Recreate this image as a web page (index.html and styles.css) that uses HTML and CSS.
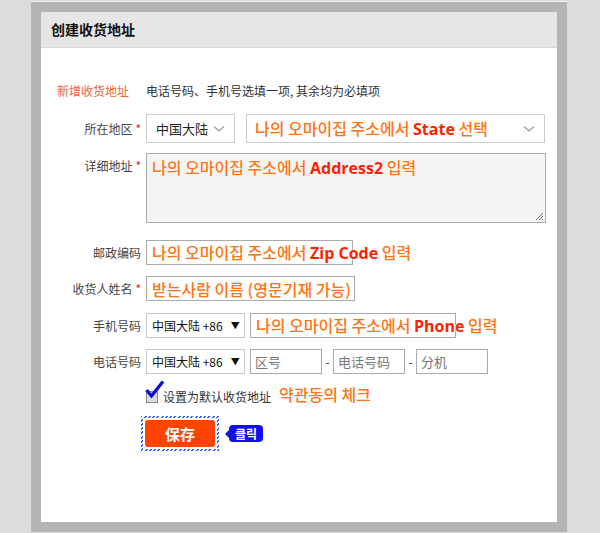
FILE: index.html
```html
<!DOCTYPE html>
<html lang="zh-CN">
<head>
<meta charset="utf-8">
<title>创建收货地址</title>
<link rel="stylesheet" href="styles.css">
</head>
<body>
<div class="frame">
  <div class="dialog">
    <div class="hd">创建收货地址</div>
    <div class="form">
      <div class="notice">
        <span class="new">新增收货地址</span>
        <span class="tip">电话号码、手机号选填一项, 其余均为必填项</span>
      </div>

      <div class="row r-region">
        <label class="lbl">所在地区<i>*</i></label>
        <div class="sel sel-country"><span>中国大陆</span>
          <svg class="chev" width="12" height="8" viewBox="0 0 12 8"><path d="M1 1.5 L6 6 L11 1.5" fill="none" stroke="#999" stroke-width="1.2"/></svg>
        </div>
        <div class="sel sel-state"><span class="ann">나의 오마이집 주소에서 <b>State</b> 선택</span>
          <svg class="chev" width="12" height="8" viewBox="0 0 12 8"><path d="M1 1.5 L6 6 L11 1.5" fill="none" stroke="#999" stroke-width="1.2"/></svg>
        </div>
      </div>

      <div class="row r-addr">
        <label class="lbl top">详细地址<i>*</i></label>
        <div class="area"><span class="ann">나의 오마이집 주소에서 <b>Address2</b> 입력</span>
          <svg class="grip" width="9" height="9" viewBox="0 0 9 9"><path d="M8 1 L1 8 M8 4 L4 8 M8 7 L7 8" stroke="#777" stroke-width="1"/></svg>
        </div>
      </div>

      <div class="row r-zip">
        <label class="lbl">邮政编码</label>
        <div class="inp w-zip"><span class="ann">나의 오마이집 주소에서 <b>Zip Code</b> 입력</span></div>
      </div>

      <div class="row r-name">
        <label class="lbl">收货人姓名<i>*</i></label>
        <div class="inp w-name"><span class="ann">받는사람 이름 (영문기재 가능)</span></div>
      </div>

      <div class="row r-mobile">
        <label class="lbl">手机号码</label>
        <div class="sel sel-code">中国大陆 +86<span class="tri">▼</span></div>
        <div class="inp w-mobile"><span class="ann">나의 오마이집 주소에서 <b>Phone</b> 입력</span></div>
      </div>

      <div class="row r-phone">
        <label class="lbl">电话号码</label>
        <div class="sel sel-code">中国大陆 +86<span class="tri">▼</span></div>
        <div class="inp small ph">区号</div>
        <span class="dash">-</span>
        <div class="inp small ph">电话号码</div>
        <span class="dash">-</span>
        <div class="inp small ph">分机</div>
      </div>

      <div class="row r-check">
        <div class="chk">
          <span class="box"></span>
          <svg class="tick" width="20" height="19" viewBox="0 0 20 19"><path d="M1.5 10 L6.5 16 L18 1.5" fill="none" stroke="#0a0ad8" stroke-width="3.2" stroke-linejoin="miter"/></svg>
        </div>
        <span class="chk-text">设置为默认收货地址</span>
        <span class="ann note">약관동의 체크</span>
      </div>

      <div class="row r-save">
        <div class="hatch">
          <div class="hatch-in"><button class="save">保存</button></div>
        </div>
        <span class="bubble">클릭</span>
      </div>
    </div>
  </div>
</div>
</body>
</html>
```

FILE: styles.css
```css
html, body {
  margin: 0;
  padding: 0;
  background: #dcdcdc;
  font-family: "Noto Sans CJK SC", "Noto Sans", sans-serif;
}

.frame {
  margin: 2px 0 0 31px;
  width: 516px;
  height: 510px;
  border: 10px solid #b4b4b4;
  box-shadow: 0 -1px 0 #f2f2f2, 0 1px 0 #eeeeee;
}

.dialog {
  background: #fff;
  height: 100%;
}

.hd {
  height: 35px;
  line-height: 35px;
  background: #e6e6e6;
  border-bottom: 1px solid #d8d8d8;
  padding-left: 10px;
  font-size: 14px;
  font-weight: bold;
  color: #111;
}

.form {
  padding-top: 33px;
}

.notice {
  height: 20px;
  line-height: 20px;
  display: flex;
  font-size: 12px;
}
.notice .new {
  color: #f6603a;
  padding-left: 16px;
  width: 89px;
}
.notice .tip {
  color: #333;
}

.row {
  display: flex;
  align-items: center;
}
.r-region { margin-top: 13px; }
.r-addr { margin-top: 10px; align-items: flex-start; }
.r-zip { margin-top: 17px; }
.r-name { margin-top: 11px; }
.r-mobile { margin-top: 12px; }
.r-phone { margin-top: 11px; }
.r-check { margin-top: 9px; height: 22px; }
.r-save { margin-top: 11px; padding-left: 100px; }

.lbl {
  width: 105px;
  padding-right: 5px;
  box-sizing: border-box;
  text-align: right;
  font-size: 12px;
  color: #444;
  flex: none;
}
.lbl.top { padding-top: 4px; }
.lbl i {
  font-style: normal;
  color: #e2231a;
  margin-left: 3px;
  font-size: 12px;
}

.ann {
  font-family: "Noto Sans CJK KR", "Noto Sans CJK SC", sans-serif;
  font-size: 16px;
  font-weight: 500;
  color: #ff7412;
  white-space: nowrap;
  text-shadow: 0 0 2px #fff, 0 0 2px #fff, 0 0 1px #fff;
  line-height: 22px;
}
.ann b {
  font-family: "Open Sans", "Noto Sans", sans-serif;
  font-weight: 700;
  color: #ff1e00;
}

.sel {
  display: flex;
  align-items: center;
  box-sizing: border-box;
  border: 1px solid #cccccc;
  background: #fff;
  font-size: 13px;
  color: #222;
  flex: none;
  position: relative;
  white-space: nowrap;
}
.sel-country {
  width: 89px;
  height: 29px;
  padding-left: 9px;
}
.sel-state {
  width: 299px;
  height: 29px;
  margin-left: 11px;
  padding-left: 8px;
}
.sel .chev {
  position: absolute;
  right: 9px;
  top: 10px;
}
.sel-code {
  width: 99px;
  height: 25px;
  padding-left: 5px;
  border-color: #c8c8c8;
  font-size: 12px;
  color: #111;
}
.sel-code .tri {
  font-size: 9px;
  margin-left: 8px;
  color: #111;
}

.area {
  width: 400px;
  height: 70px;
  box-sizing: border-box;
  border: 1px solid #aaaaaa;
  background: #f4f4f4;
  padding: 1px 5px;
  position: relative;
}
.area .grip {
  position: absolute;
  right: 1px;
  bottom: 1px;
}

.inp {
  height: 25px;
  box-sizing: border-box;
  border: 1px solid #aaaaaa;
  background: #fff;
  padding-left: 5px;
  display: flex;
  align-items: center;
  flex: none;
  overflow: visible;
}
.w-zip { width: 207px; }
.w-name { width: 209px; }
.w-mobile { width: 206px; margin-left: 5px; }
.inp.small {
  width: 72px;
  font-size: 13px;
  color: #777;
  padding-left: 4px;
}
.r-phone .sel-code + .inp { margin-left: 5px; }
.dash {
  width: 11px;
  text-align: center;
  font-size: 12px;
  color: #333;
  flex: none;
}

.chk {
  position: relative;
  width: 17px;
  height: 22px;
  margin-left: 105px;
  flex: none;
}
.chk .box {
  position: absolute;
  left: 0;
  top: 8px;
  width: 10px;
  height: 10px;
  border: 1px solid #8a8a8a;
  background: #dcdcdc;
}
.chk .tick {
  position: absolute;
  left: -1px;
  top: -3px;
}
.chk-text {
  font-size: 12px;
  color: #333;
  margin-top: 5px;
}
.note {
  margin-left: 8px;
}

.hatch {
  padding: 2px;
  background: repeating-linear-gradient(135deg, #2f5ef0 0 1.4px, #fff 1.4px 3px);
}
.hatch-in {
  background: #fff;
  padding: 2px 2px;
}
.save {
  display: block;
  width: 70px;
  height: 27px;
  border: 0;
  border-radius: 3px;
  background: #ff4400;
  color: #fff;
  font-family: "Noto Sans CJK SC", sans-serif;
  font-size: 15px;
  font-weight: bold;
  padding: 0;
  cursor: pointer;
}

.bubble {
  position: relative;
  margin-left: 10px;
  background: #1010f0;
  color: #fff;
  font-family: "Noto Sans CJK KR", sans-serif;
  font-size: 12px;
  font-weight: bold;
  height: 17px;
  line-height: 17px;
  padding: 0 6px;
  border-radius: 4px;
}
.bubble::before {
  content: "";
  position: absolute;
  left: -4px;
  top: 5px;
  border-top: 4px solid transparent;
  border-bottom: 4px solid transparent;
  border-right: 4px solid #1010f0;
}
```
